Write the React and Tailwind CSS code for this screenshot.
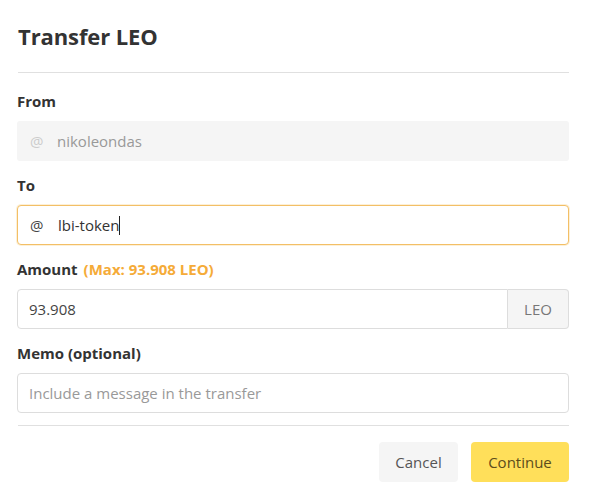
import { useState } from 'react';

function Field({ label, extra, children }) {
  return (
    <div className="mt-[14px] first:mt-[18px]">
      <div className="h-5 flex items-center gap-[6px] text-[15px] font-bold text-[#333]">
        <span>{label}</span>
        {extra && <span className="text-[#f5ab38]">{extra}</span>}
      </div>
      <div className="mt-[10px]">{children}</div>
    </div>
  );
}

export default function App() {
  const [amount, setAmount] = useState('93.908');
  const [memo, setMemo] = useState('');

  return (
    <div className="w-[590px] h-[504px] bg-white text-[#333]" style={{ fontFamily: '"Open Sans", "Liberation Sans", sans-serif' }}>
      <div className="ml-[17px] w-[552px]">
        <div className="h-[73px] flex items-center border-b border-[#e0e0e0] ml-px">
          <h1 className="text-[22px] font-bold text-[#333] tracking-[-0.1px]">Transfer LEO</h1>
        </div>

        <div className="flex flex-col">
          <Field label="From">
            <div className="h-10 rounded-[3px] bg-[#f5f5f5] flex items-center text-[15px]">
              <span className="w-10 pl-[13px] text-[#ccc]">@</span>
              <span className="text-[#999]">nikoleondas</span>
            </div>
          </Field>

          <Field label="To">
            <div className="h-10 rounded-[4px] border border-[#f3bf66] shadow-[0_0_0_1px_rgba(245,195,100,0.25)] bg-white flex items-center text-[15px]">
              <span className="w-10 pl-3 text-[#444]">@</span>
              <span className="text-[#333]">lbi-token</span>
              <span className="w-px h-[19px] bg-[#222]" />
            </div>
          </Field>

          <Field label="Amount" extra="(Max: 93.908 LEO)">
            <div className="h-10 flex text-[15px]">
              <input
                value={amount}
                onChange={e => setAmount(e.target.value)}
                className="flex-1 min-w-0 rounded-l-[4px] border border-[#ddd] px-[11px] outline-none text-[#444]"
              />
              <div className="w-[61px] rounded-r-[4px] border border-l-0 border-[#ddd] bg-[#f5f5f5] flex items-center justify-center text-[#777]">
                LEO
              </div>
            </div>
          </Field>

          <Field label="Memo (optional)">
            <input
              value={memo}
              onChange={e => setMemo(e.target.value)}
              placeholder="Include a message in the transfer"
              className="w-full h-10 rounded-[4px] border border-[#ddd] px-[11px] outline-none text-[15px] text-[#444] placeholder:text-[#999]"
            />
          </Field>
        </div>

        <div className="mt-3 border-t border-[#e0e0e0] ml-px" />

        <div className="mt-4 flex justify-end gap-[13px] text-[15px]">
          <button className="h-10 w-[79px] rounded-[4px] bg-[#f5f5f5] text-[#555]">Cancel</button>
          <button className="h-10 w-[98px] rounded-[4px] bg-[#ffdf5a] text-[#5c4d1c]">Continue</button>
        </div>
      </div>
    </div>
  );
}
